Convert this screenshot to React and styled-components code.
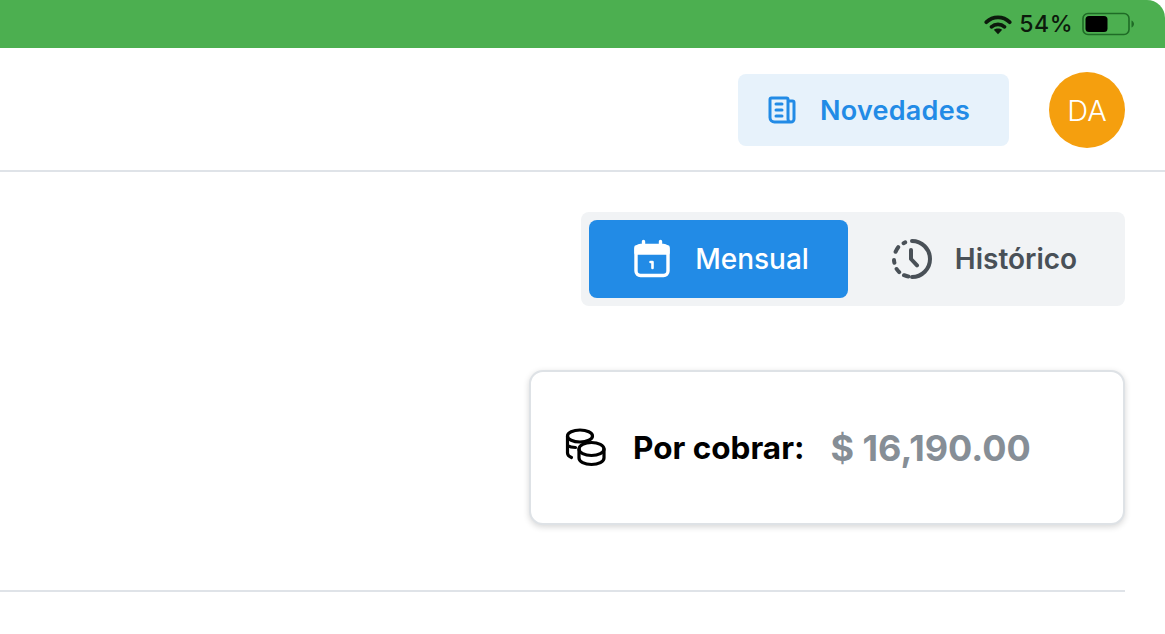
import React from 'react';
import styled, { createGlobalStyle } from 'styled-components';

const Global = createGlobalStyle`
  html, body { margin: 0; padding: 0; background: #fff; }
  body { font-family: Inter, "Liberation Sans", sans-serif; width: 1165px; height: 634px; overflow: hidden; }
`;
const Page = styled.div`
  width: 1165px; height: 634px; display: flex; flex-direction: column; background: #fff;
`;
const StatusBar = styled.div`
  height: 48px; flex: none; background: #4caf50; display: flex; align-items: center; justify-content: flex-end;
  padding: 0 31px 0 0; box-sizing: border-box; border-top-right-radius: 18px;
`;
const StatusText = styled.span`
  font-family: Inter, sans-serif; font-size: 23px; font-weight: 500; line-height: 26px; letter-spacing: 0.5px; color: #0c1a0c;
  margin: 0 9px 0 7px;
`;
const Header = styled.header`
  height: 124px; flex: none; box-sizing: border-box; border-bottom: 2px solid #dfe3e8; display: flex; align-items: center;
  justify-content: flex-end; gap: 40px; padding: 2px 40px 0 0;
`;
const NewsButton = styled.div`
  width: 271px; height: 72px; border-radius: 8px; background: #e7f2fb; color: #228be6; display: flex; align-items: center;
  gap: 20px; padding-left: 26px; box-sizing: border-box; font-size: 27px; font-weight: 600; letter-spacing: 0.25px;
`;
const Avatar = styled.div`
  width: 76px; height: 76px; border-radius: 50%; background: #f59f0e; color: #fff; display: flex; align-items: center;
  justify-content: center; font-size: 29px; font-weight: 300;
`;
const Main = styled.main`
  flex: 1; display: flex; flex-direction: column; align-items: flex-end; padding: 40px 40px 0 0;
`;
const Segments = styled.div`
  display: flex; background: #f1f3f5; border-radius: 8px; padding: 8px; height: 94px; box-sizing: border-box;
`;
const Segment = styled.div`
  width: ${p => p.$w}px; border-radius: 8px; display: flex; align-items: center; justify-content: center; gap: ${p => p.$gap}px;
  box-sizing: border-box; padding-left: ${p => (p.$active ? 3 : 0)}px;
  font-size: 28px; font-weight: ${p => (p.$active ? 500 : 600)}; background: ${p => (p.$active ? '#228be6' : 'transparent')};
  color: ${p => (p.$active ? '#fff' : '#495057')};
`;
const Card = styled.div`
  margin-top: 64px; width: 596px; height: 155px; box-sizing: border-box; border: 2px solid #dee2e6; border-radius: 14px;
  background: #fff; box-shadow: 0 2px 6px rgba(0,0,0,0.16); display: flex; align-items: center; padding-left: 34px;
`;
const CardLabel = styled.span`
  margin-left: 27px; font-size: 31.500px; font-weight: 700; color: #000;
`;
const CardValue = styled.span`
  margin-left: 26px; font-size: 36px; font-weight: 700; color: #868e96;
`;
const Divider = styled.hr`
  margin: 65px 0 0; width: 1125px; border: 0; border-top: 2px solid #dfe3e8; align-self: flex-start;
`;

const Wifi = () => (
  <svg width="28" height="21" viewBox="0 0 30 22" fill="none" stroke="#0c1a0c" strokeWidth="4" strokeLinecap="round">
    <path d="M2.500 8.500C9.500 1.500 20.500 1.500 27.500 8.500" />
    <path d="M8 13.500C12 10 18 10 22 13.500" />
    <path d="M15 21.500l-4.500-4.800c2.600-2 6.400-2 9 0z" fill="#0c1a0c" stroke="none" />
  </svg>
);
const Battery = () => (
  <svg width="52" height="24" viewBox="0 0 52 24">
    <rect x="1" y="1.500" width="46" height="21" rx="5" fill="none" stroke="#1f6b26" strokeWidth="1.600" />
    <rect x="3.500" y="4" width="22" height="16" rx="3.500" fill="#000" />
    <path d="M49.500 8.500c1.500.6 2.500 2 2.500 3.500s-1 2.900-2.500 3.500z" fill="#1f6b26" />
  </svg>
);
const NewsIcon = () => (
  <svg width="36" height="36" viewBox="0 0 24 24" fill="none" stroke="#228be6" strokeWidth="2" strokeLinecap="round" strokeLinejoin="round">
    <path d="M16 6h3a1 1 0 0 1 1 1v11a2 2 0 0 1-4 0V5a1 1 0 0 0-1-1H5a1 1 0 0 0-1 1v12a3 3 0 0 0 3 3h11" />
    <path d="M8 8h4M8 12h4M8 16h4" />
  </svg>
);
const CalendarIcon = () => (
  <svg width="40" height="40" viewBox="-1 0 40 40" fill="none" stroke="#fff" strokeWidth="3.400" strokeLinecap="round" strokeLinejoin="round">
    <rect x="4" y="6.500" width="32" height="30" rx="4.500" />
    <path d="M11.500 2.500v6M28.500 2.500v6" />
    <path d="M4 8h32v6H4z" fill="#fff" />
    <path d="M18.500 23h2v6" strokeWidth="2.600" />
  </svg>
);
const HistoryIcon = () => (
  <svg width="48" height="48" viewBox="0 0 24 24" fill="none" stroke="#495057" strokeWidth="2" strokeLinecap="round" strokeLinejoin="round">
    <path d="M12 3a9 9 0 0 1 0 18" />
    <path d="M8.600 3.700a9 9 0 0 0-.8.4M5.100 6.100a9 9 0 0 0-1.300 2.300M3 12.500c0 .5.100 1 .200 1.400M4.300 17c.4.600.8 1.100 1.300 1.600M8 20.100c.7.300 1.400.6 2.200.7" />
    <path d="M11.500 7.500V12l3 3.200" />
  </svg>
);
const CoinsIcon = () => (
  <svg width="41" height="39" viewBox="0 0 41 39" fill="none" stroke="#000" strokeWidth="3.200" strokeLinecap="round" strokeLinejoin="round">
    <ellipse cx="15" cy="8" rx="12.500" ry="6" />
    <path d="M2.500 8v17c0 2 1.500 3.500 4 4.500M2.500 17.500c1.500 1 4 2 8 2" />
    <ellipse cx="26.500" cy="21" rx="12.500" ry="6.500" fill="#fff" />
    <path d="M14 21v9c0 3.500 5.500 6.500 12.500 6.500S39 33.500 39 30v-9" />
  </svg>
);

export default function App() {
  return (
    <Page>
      <Global />
      <StatusBar>
        <Wifi />
        <StatusText>54%</StatusText>
        <Battery />
      </StatusBar>
      <Header>
        <NewsButton><NewsIcon />Novedades</NewsButton>
        <Avatar>DA</Avatar>
      </Header>
      <Main>
        <Segments>
          <Segment $active $w={259} $gap={24}><CalendarIcon />Mensual</Segment>
          <Segment $w={269} $gap={19}><HistoryIcon />Histórico</Segment>
        </Segments>
        <Card>
          <CoinsIcon />
          <CardLabel>Por cobrar:</CardLabel>
          <CardValue>$ 16,190.00</CardValue>
        </Card>
        <Divider />
      </Main>
    </Page>
  );
}
